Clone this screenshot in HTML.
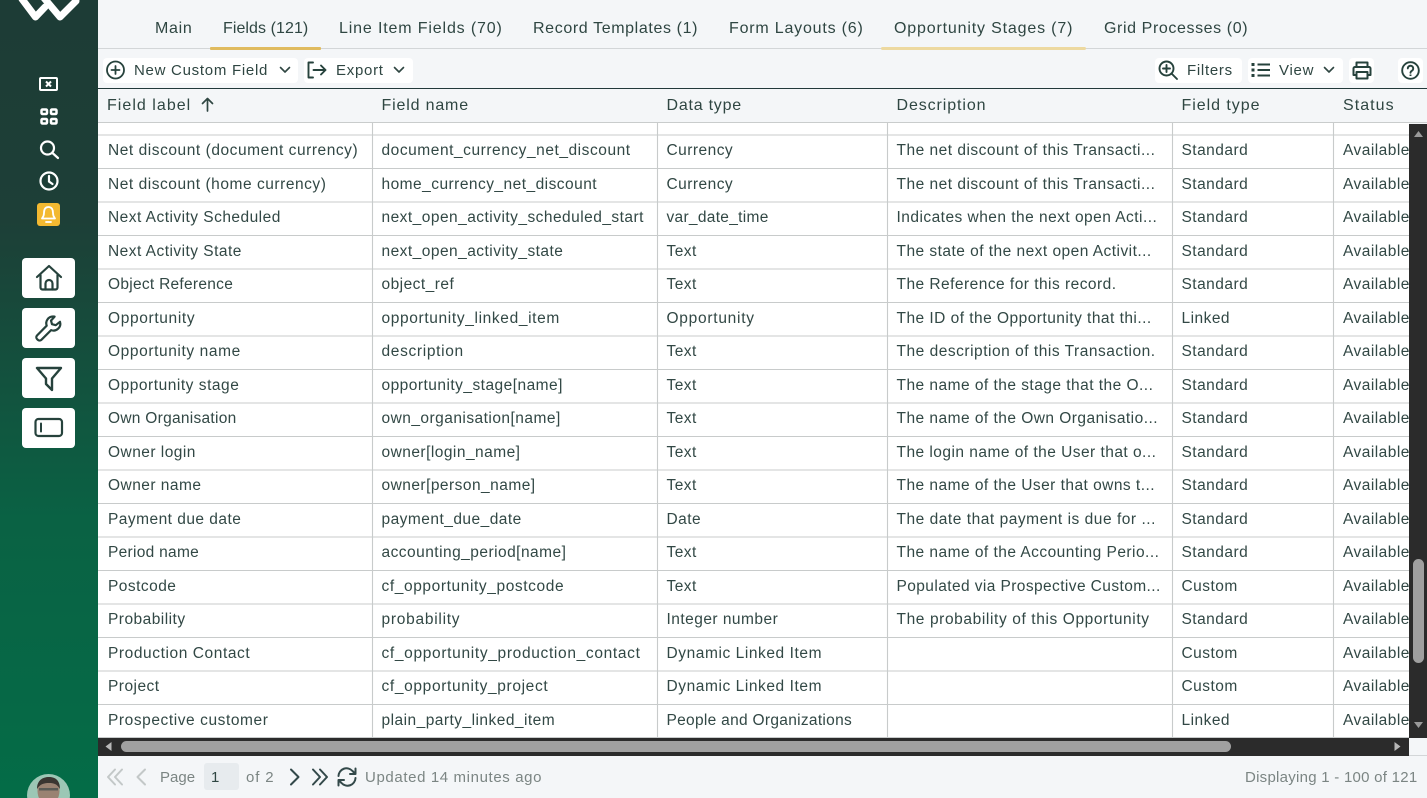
<!DOCTYPE html>
<html><head><meta charset="utf-8"><style>
html,body{margin:0;padding:0;width:1427px;height:798px;overflow:hidden;background:#f4f6f8;font-family:"Liberation Sans",sans-serif;color:#2f4642}
*{box-sizing:border-box}
.a{position:absolute;white-space:nowrap}
#side{position:absolute;left:0;top:0;width:98px;height:798px;background:linear-gradient(#1d3c36 0,#1d3f37 220px,#0a6244 520px,#046c47 798px)}
.nb{position:absolute;left:22px;width:53px;height:40px;background:#fff;border-radius:4px}
.t{font-size:16px;top:19px;line-height:20px}
.b{position:absolute;background:#fff;border-radius:4px;height:25px;top:58px}
.tb{font-size:15px;letter-spacing:.72px;top:60px;line-height:20px}
.h{font-size:16px;top:95px;line-height:20px}
#rows{position:absolute;left:98px;top:123px;width:1311px;height:615px;background:#fff;overflow:hidden}
.r{position:absolute;left:0;width:1311px;height:33px}
.r span{position:absolute;top:7px;font-size:15.5px;letter-spacing:.47px;line-height:20px;white-space:nowrap;color:#324845}
.c1{left:10px}.c2{left:283.5px}.c3{left:568.5px}.c4{left:798.5px}.c5{left:1083.5px}.c6{left:1245px}
svg{position:absolute;overflow:visible}
.f{font-size:15px;letter-spacing:.62px;top:767px;line-height:20px;color:#7b8583}
</style></head><body>
<div id="side">
<svg style="left:0;top:0" width="98" height="30" fill="none" stroke="#fff" stroke-width="7" stroke-linecap="round" stroke-linejoin="round"><path d="M22 -1 35.500 17 45 7"/><path d="M44 -2 60 17 76 1"/></svg>
<svg style="left:38px;top:76px" width="22" height="16" fill="none" stroke="#fff" stroke-width="2"><rect x="2" y="2" width="17" height="12" rx="1"/><path d="M8 5.500 13 10.500M13 5.500 8 10.500"/></svg>
<svg style="left:40px;top:108px" width="18" height="18" fill="none" stroke="#fff" stroke-width="2.500"><rect x="1.500" y="1.500" width="5.500" height="4.500" rx="1"/><rect x="11" y="1.500" width="5.500" height="4.500" rx="1"/><rect x="1.500" y="11" width="5.500" height="4.500" rx="1"/><rect x="11" y="11" width="5.500" height="4.500" rx="1"/></svg>
<svg style="left:39px;top:139px" width="20" height="20" fill="none" stroke="#fff" stroke-width="2.200" stroke-linecap="round"><circle cx="8.500" cy="9" r="6.500"/><path d="M13.500 14 19 19"/></svg>
<svg style="left:39px;top:171px" width="20" height="20" fill="none" stroke="#fff" stroke-width="2.200" stroke-linecap="round"><circle cx="10" cy="10" r="8.500"/><path d="M10 5v5.500l3.500 2.500"/></svg>
<div class="a" style="left:37px;top:203px;width:23px;height:23px;background:#f3b931;border-radius:3px"></div>
<svg style="left:39px;top:205px" width="19" height="19" fill="none" stroke="#fff" stroke-width="1.800" stroke-linejoin="round"><path d="M9.500 2C6 2 5 5 5 8c0 3-1 4-2 5.500h13c-1-1.500-2-2.500-2-5.500 0-3-1-6-4.500-6Z"/><path d="M7 17h5" stroke-linecap="round"/></svg>
<div class="nb" style="top:258px"></div>
<svg style="left:36px;top:264px" width="26" height="28" fill="none" stroke="#26423c" stroke-width="2.200" stroke-linejoin="round" stroke-linecap="round"><path d="M1 13 13 2l12 11"/><path d="M4.500 11v12.500a2 2 0 0 0 2 2h13a2 2 0 0 0 2-2V11"/><path d="M9.500 25.500v-6a3.500 3.500 0 0 1 7 0v6"/></svg>
<div class="nb" style="top:308px"></div>
<svg style="left:35px;top:314px" width="28" height="28" fill="none" stroke="#26423c" stroke-width="2.200" stroke-linejoin="round"><path d="M18 2.500a6.800 6.800 0 0 0-6.300 9.200L2 21.500a2.600 2.600 0 0 0 0 3.500l.8.800a2.600 2.600 0 0 0 3.600 0l9.700-9.700A6.800 6.800 0 0 0 25 7.800l-4.200 3.400-3.800-1-1-3.600 3.600-4Z"/></svg>
<div class="nb" style="top:358px"></div>
<svg style="left:35px;top:366px" width="28" height="26" fill="none" stroke="#26423c" stroke-width="2.400" stroke-linejoin="round"><path d="M2 2h24L17 12.500V24l-6-6v-5.500Z"/></svg>
<div class="nb" style="top:408px"></div>
<svg style="left:34px;top:417px" width="30" height="22" fill="none" stroke="#26423c" stroke-width="2.200" stroke-linecap="round"><rect x="1.500" y="2" width="26.500" height="17" rx="3"/><path d="M7 6.500v8" stroke-width="2"/></svg>
<svg style="left:25px;top:774px" width="46" height="24"><defs><clipPath id="av"><circle cx="23.500" cy="21.500" r="21.500"/></clipPath></defs><g clip-path="url(#av)"><rect x="0" y="0" width="47" height="24" fill="#9cc7b5"/><ellipse cx="23.500" cy="17" rx="11" ry="14" fill="#9a8272"/><path d="M12 15c0-9 6-12 12-12s11 3 11 12c-3-5-6-6-11-6s-9 1-12 6Z" fill="#3a3531"/><rect x="14" y="14" width="19" height="2.500" fill="#5a5a55"/></g></svg>
</div>

<div class="a" style="left:98px;top:48px;width:1329px;height:1px;background:#d3d6d8"></div>
<div class="a t" style="left:155px;letter-spacing:.7px">Main</div>
<div class="a t" style="left:223px;letter-spacing:.07px">Fields (121)</div>
<div class="a t" style="left:339px;letter-spacing:.85px">Line Item Fields (70)</div>
<div class="a t" style="left:533px;letter-spacing:.62px">Record Templates (1)</div>
<div class="a t" style="left:729px;letter-spacing:.8px">Form Layouts (6)</div>
<div class="a t" style="left:894px;letter-spacing:.83px">Opportunity Stages (7)</div>
<div class="a t" style="left:1104px;letter-spacing:.6px">Grid Processes (0)</div>
<div class="a" style="left:210px;top:47px;width:111px;height:3px;background:#e0bb5f;border-radius:1px"></div>
<div class="a" style="left:881px;top:47px;width:205px;height:3px;background:#edd9a0;border-radius:2px"></div>

<div class="b" style="left:103px;width:195px"></div>
<div class="b" style="left:304px;width:109px"></div>
<div class="b" style="left:1155px;width:87px"></div>
<div class="b" style="left:1248px;width:95px"></div>
<div class="b" style="left:1349px;width:25px"></div>
<div class="b" style="left:1398px;width:25px"></div>
<svg style="left:106px;top:60px" width="20" height="20" fill="none" stroke="#26423c" stroke-width="1.800" stroke-linecap="round"><circle cx="9.500" cy="10" r="8.500"/><path d="M9.500 6v8M5.500 10h8"/></svg>
<div class="a tb" style="left:134px;top:61px">New Custom Field</div>
<svg style="left:279px;top:66px" width="12" height="8" fill="none" stroke="#2f4642" stroke-width="1.600" stroke-linecap="round" stroke-linejoin="round"><path d="M1.500 1.500 6 6l4.500-4.500"/></svg>
<svg style="left:307px;top:61px" width="20" height="18" fill="none" stroke="#26423c" stroke-width="1.900" stroke-linecap="round" stroke-linejoin="round"><path d="M6 1.500H1.500v15H6"/><path d="M6.500 9h12M14 4.500 18.500 9 14 13.500"/></svg>
<div class="a tb" style="left:336px;top:61px">Export</div>
<svg style="left:393px;top:66px" width="12" height="8" fill="none" stroke="#2f4642" stroke-width="1.600" stroke-linecap="round" stroke-linejoin="round"><path d="M1.500 1.500 6 6l4.500-4.500"/></svg>
<svg style="left:1158px;top:60px" width="20" height="20" fill="none" stroke="#26423c" stroke-width="1.900" stroke-linecap="round"><circle cx="8.500" cy="8.500" r="7"/><path d="M13.500 13.500 19 19M8.500 5v7M5 8.500h7"/></svg>
<div class="a tb" style="left:1187px;top:61px">Filters</div>
<svg style="left:1251px;top:62px" width="20" height="16" fill="none" stroke="#26423c" stroke-width="2"><path d="M6.500 2.500H19M6.500 8H19M6.500 13.500H19"/><path d="M.5 2.500h3M.5 8h3M.5 13.500h3" stroke-width="3"/></svg>
<div class="a tb" style="left:1279px;top:61px">View</div>
<svg style="left:1323px;top:66px" width="12" height="8" fill="none" stroke="#2f4642" stroke-width="1.600" stroke-linecap="round" stroke-linejoin="round"><path d="M1.500 1.500 6 6l4.500-4.500"/></svg>
<svg style="left:1352px;top:61px" width="20" height="19" fill="none" stroke="#26423c" stroke-width="2" stroke-linejoin="round"><path d="M4.500 6V1.500h11V6"/><path d="M4.500 14H1.500V7.500a1.500 1.500 0 0 1 1.500-1.500h14a1.500 1.500 0 0 1 1.500 1.500V14h-3"/><path d="M4.500 11h11v6.500h-11Z"/></svg>
<svg style="left:1401px;top:61px" width="19" height="19" fill="none" stroke="#26423c" stroke-width="1.900"><circle cx="9.500" cy="9.500" r="8.300"/><path d="M6.800 7.400a2.700 2.700 0 1 1 4.200 2.300c-1 .6-1.500 1.100-1.500 2.100" stroke-linecap="round"/><path d="M9.500 13.500v1.500"/></svg>

<div class="a" style="left:98px;top:88px;width:1329px;height:1px;background:#22393a"></div>
<div class="a h" style="left:107px;top:96px;letter-spacing:1.03px">Field label</div>
<svg style="left:201px;top:97px" width="13" height="15" fill="none" stroke="#2f4642" stroke-width="1.700" stroke-linecap="round" stroke-linejoin="round"><path d="M6.500 14V1.500M1.500 6.500l5-5 5 5"/></svg>
<div class="a h" style="left:381.500px;top:96px;letter-spacing:.83px">Field name</div>
<div class="a h" style="left:666.500px;top:96px;letter-spacing:.77px">Data type</div>
<div class="a h" style="left:896.500px;top:96px;letter-spacing:.9px">Description</div>
<div class="a h" style="left:1181.500px;top:96px;letter-spacing:.96px">Field type</div>
<div class="a h" style="left:1343px;top:96px;letter-spacing:1.05px">Status</div>
<div class="a" style="left:98px;top:122px;width:1329px;height:1px;background:#c9cccc"></div>

<div id="rows">
<div class="r" style="top:-25px"><span class="c1">Net discount (customer currency)</span><span class="c2">customer_currency_net_discount</span><span class="c3">Currency</span></div>
<div class="r" style="top:11px"><span class="c1" style="letter-spacing:.55px">Net discount (document currency)</span><span class="c2" style="letter-spacing:.55px">document_currency_net_discount</span><span class="c3">Currency</span><span class="c4" style="letter-spacing:.5px">The net discount of this Transacti...</span><span class="c5">Standard</span><span class="c6">Available</span></div>
<div class="r" style="top:45px"><span class="c1" style="letter-spacing:.54px">Net discount (home currency)</span><span class="c2">home_currency_net_discount</span><span class="c3">Currency</span><span class="c4" style="letter-spacing:.5px">The net discount of this Transacti...</span><span class="c5">Standard</span><span class="c6">Available</span></div>
<div class="r" style="top:78px"><span class="c1">Next Activity Scheduled</span><span class="c2">next_open_activity_scheduled_start</span><span class="c3" style="letter-spacing:.3px">var_date_time</span><span class="c4">Indicates when the next open Acti...</span><span class="c5">Standard</span><span class="c6">Available</span></div>
<div class="r" style="top:112px"><span class="c1">Next Activity State</span><span class="c2">next_open_activity_state</span><span class="c3">Text</span><span class="c4">The state of the next open Activit...</span><span class="c5">Standard</span><span class="c6">Available</span></div>
<div class="r" style="top:145px"><span class="c1" style="letter-spacing:.28px">Object Reference</span><span class="c2">object_ref</span><span class="c3">Text</span><span class="c4">The Reference for this record.</span><span class="c5">Standard</span><span class="c6">Available</span></div>
<div class="r" style="top:179px"><span class="c1" style="letter-spacing:.65px">Opportunity</span><span class="c2" style="letter-spacing:.64px">opportunity_linked_item</span><span class="c3" style="letter-spacing:.74px">Opportunity</span><span class="c4">The ID of the Opportunity that thi...</span><span class="c5">Linked</span><span class="c6">Available</span></div>
<div class="r" style="top:212px"><span class="c1" style="letter-spacing:.6px">Opportunity name</span><span class="c2" style="letter-spacing:.67px">description</span><span class="c3">Text</span><span class="c4" style="letter-spacing:.52px">The description of this Transaction.</span><span class="c5">Standard</span><span class="c6">Available</span></div>
<div class="r" style="top:246px"><span class="c1" style="letter-spacing:.53px">Opportunity stage</span><span class="c2">opportunity_stage[name]</span><span class="c3">Text</span><span class="c4">The name of the stage that the O...</span><span class="c5">Standard</span><span class="c6">Available</span></div>
<div class="r" style="top:279px"><span class="c1" style="letter-spacing:.28px">Own Organisation</span><span class="c2">own_organisation[name]</span><span class="c3">Text</span><span class="c4">The name of the Own Organisatio...</span><span class="c5">Standard</span><span class="c6">Available</span></div>
<div class="r" style="top:313px"><span class="c1">Owner login</span><span class="c2">owner[login_name]</span><span class="c3">Text</span><span class="c4">The login name of the User that o...</span><span class="c5">Standard</span><span class="c6">Available</span></div>
<div class="r" style="top:346px"><span class="c1">Owner name</span><span class="c2">owner[person_name]</span><span class="c3">Text</span><span class="c4">The name of the User that owns t...</span><span class="c5">Standard</span><span class="c6">Available</span></div>
<div class="r" style="top:380px"><span class="c1">Payment due date</span><span class="c2">payment_due_date</span><span class="c3">Date</span><span class="c4" style="letter-spacing:.53px">The date that payment is due for ...</span><span class="c5">Standard</span><span class="c6">Available</span></div>
<div class="r" style="top:413px"><span class="c1" style="letter-spacing:.29px">Period name</span><span class="c2">accounting_period[name]</span><span class="c3">Text</span><span class="c4">The name of the Accounting Perio...</span><span class="c5">Standard</span><span class="c6">Available</span></div>
<div class="r" style="top:447px"><span class="c1">Postcode</span><span class="c2" style="letter-spacing:.6px">cf_opportunity_postcode</span><span class="c3">Text</span><span class="c4" style="letter-spacing:.41px">Populated via Prospective Custom...</span><span class="c5">Custom</span><span class="c6">Available</span></div>
<div class="r" style="top:480px"><span class="c1">Probability</span><span class="c2" style="letter-spacing:.74px">probability</span><span class="c3">Integer number</span><span class="c4" style="letter-spacing:.61px">The probability of this Opportunity</span><span class="c5">Standard</span><span class="c6">Available</span></div>
<div class="r" style="top:514px"><span class="c1" style="letter-spacing:.58px">Production Contact</span><span class="c2" style="letter-spacing:.67px">cf_opportunity_production_contact</span><span class="c3" style="letter-spacing:.57px">Dynamic Linked Item</span><span class="c5">Custom</span><span class="c6">Available</span></div>
<div class="r" style="top:547px"><span class="c1">Project</span><span class="c2" style="letter-spacing:.65px">cf_opportunity_project</span><span class="c3" style="letter-spacing:.57px">Dynamic Linked Item</span><span class="c5">Custom</span><span class="c6">Available</span></div>
<div class="r" style="top:581px"><span class="c1" style="letter-spacing:.57px">Prospective customer</span><span class="c2">plain_party_linked_item</span><span class="c3" style="letter-spacing:.3px">People and Organizations</span><span class="c5">Linked</span><span class="c6">Available</span></div>
<svg style="left:0;top:0" width="1311" height="615" fill="none" stroke="#c8cbcb" stroke-width="1.100"><path d="M0 12H1311M0 45.500H1311M0 79H1311M0 112.500H1311M0 146H1311M0 179.500H1311M0 213H1311M0 246.500H1311M0 280H1311M0 313.500H1311M0 347H1311M0 380.500H1311M0 414H1311M0 447.500H1311M0 481H1311M0 514.500H1311M0 548H1311M0 581.500H1311M0 614.500H1311"/><path d="M274.500 0V615M559.500 0V615M789.500 0V615M1074.500 0V615M1235.500 0V615"/></svg>
</div>

<div class="a" style="left:1409px;top:124px;width:18px;height:614px;background:#2b2b2b"></div>
<div class="a" style="left:1413px;top:559px;width:11px;height:104px;background:#a0a0a0;border-radius:6px"></div>
<svg style="left:1413px;top:130px" width="11" height="8"><path d="M1 7 5.500 1 10 7Z" fill="#9a9a9a"/></svg>
<svg style="left:1413px;top:721px" width="11" height="8"><path d="M1 1 5.500 7 10 1Z" fill="#9a9a9a"/></svg>

<div class="a" style="left:98px;top:738px;width:1311px;height:18px;background:#2b2b2b"></div>
<div class="a" style="left:121px;top:741px;width:1110px;height:11px;background:#a0a0a0;border-radius:6px"></div>
<svg style="left:104px;top:741px" width="9" height="11"><path d="M7.500 1 1.500 5.500 7.500 10Z" fill="#b8b8b8"/></svg>
<svg style="left:1393px;top:741px" width="9" height="11"><path d="M1.500 1 7.500 5.500 1.500 10Z" fill="#b8b8b8"/></svg>
<div class="a" style="left:1409px;top:755px;width:18px;height:1px;background:#d3d6d8"></div>

<svg style="left:106px;top:768px" width="18" height="18" fill="none" stroke="#c3c8c8" stroke-width="2" stroke-linecap="round" stroke-linejoin="round"><path d="M9 1.500 2 9l7 7.500M16 1.500 9 9l7 7.500"/></svg>
<svg style="left:135px;top:768px" width="12" height="18" fill="none" stroke="#c3c8c8" stroke-width="2" stroke-linecap="round" stroke-linejoin="round"><path d="M10 1.500 2.500 9l7.500 7.500"/></svg>
<div class="a f" style="left:160px;top:768px;letter-spacing:0">Page</div>
<div class="a" style="left:204px;top:763px;width:35px;height:27px;background:#e7ebee;border-radius:3px"></div>
<div class="a f" style="left:211px;top:768px;color:#2f4642">1</div>
<div class="a f" style="left:246px;top:768px;letter-spacing:.85px">of 2</div>
<svg style="left:289px;top:768px" width="12" height="18" fill="none" stroke="#33494a" stroke-width="2" stroke-linecap="round" stroke-linejoin="round"><path d="M2 1.500 9.500 9 2 16.500"/></svg>
<svg style="left:311px;top:768px" width="18" height="18" fill="none" stroke="#33494a" stroke-width="2" stroke-linecap="round" stroke-linejoin="round"><path d="M2 1.500 9 9l-7 7.500M9 1.500 16 9l-7 7.500"/></svg>
<svg style="left:337px;top:767px" width="20" height="20" fill="none" stroke="#33494a" stroke-width="2" stroke-linecap="round" stroke-linejoin="round"><path d="M1.500 9A8 8 0 0 1 15.500 4L18 6.500"/><path d="M18.500 1.500v5.500H13"/><path d="M18.500 11A8 8 0 0 1 4.500 16L2 13.500"/><path d="M1.500 18.500V13H7"/></svg>
<div class="a f" style="left:365px;top:768px">Updated 14 minutes ago</div>
<div class="a f" style="left:1245px;top:768px;letter-spacing:.26px">Displaying 1 - 100 of 121</div>
</body></html>
